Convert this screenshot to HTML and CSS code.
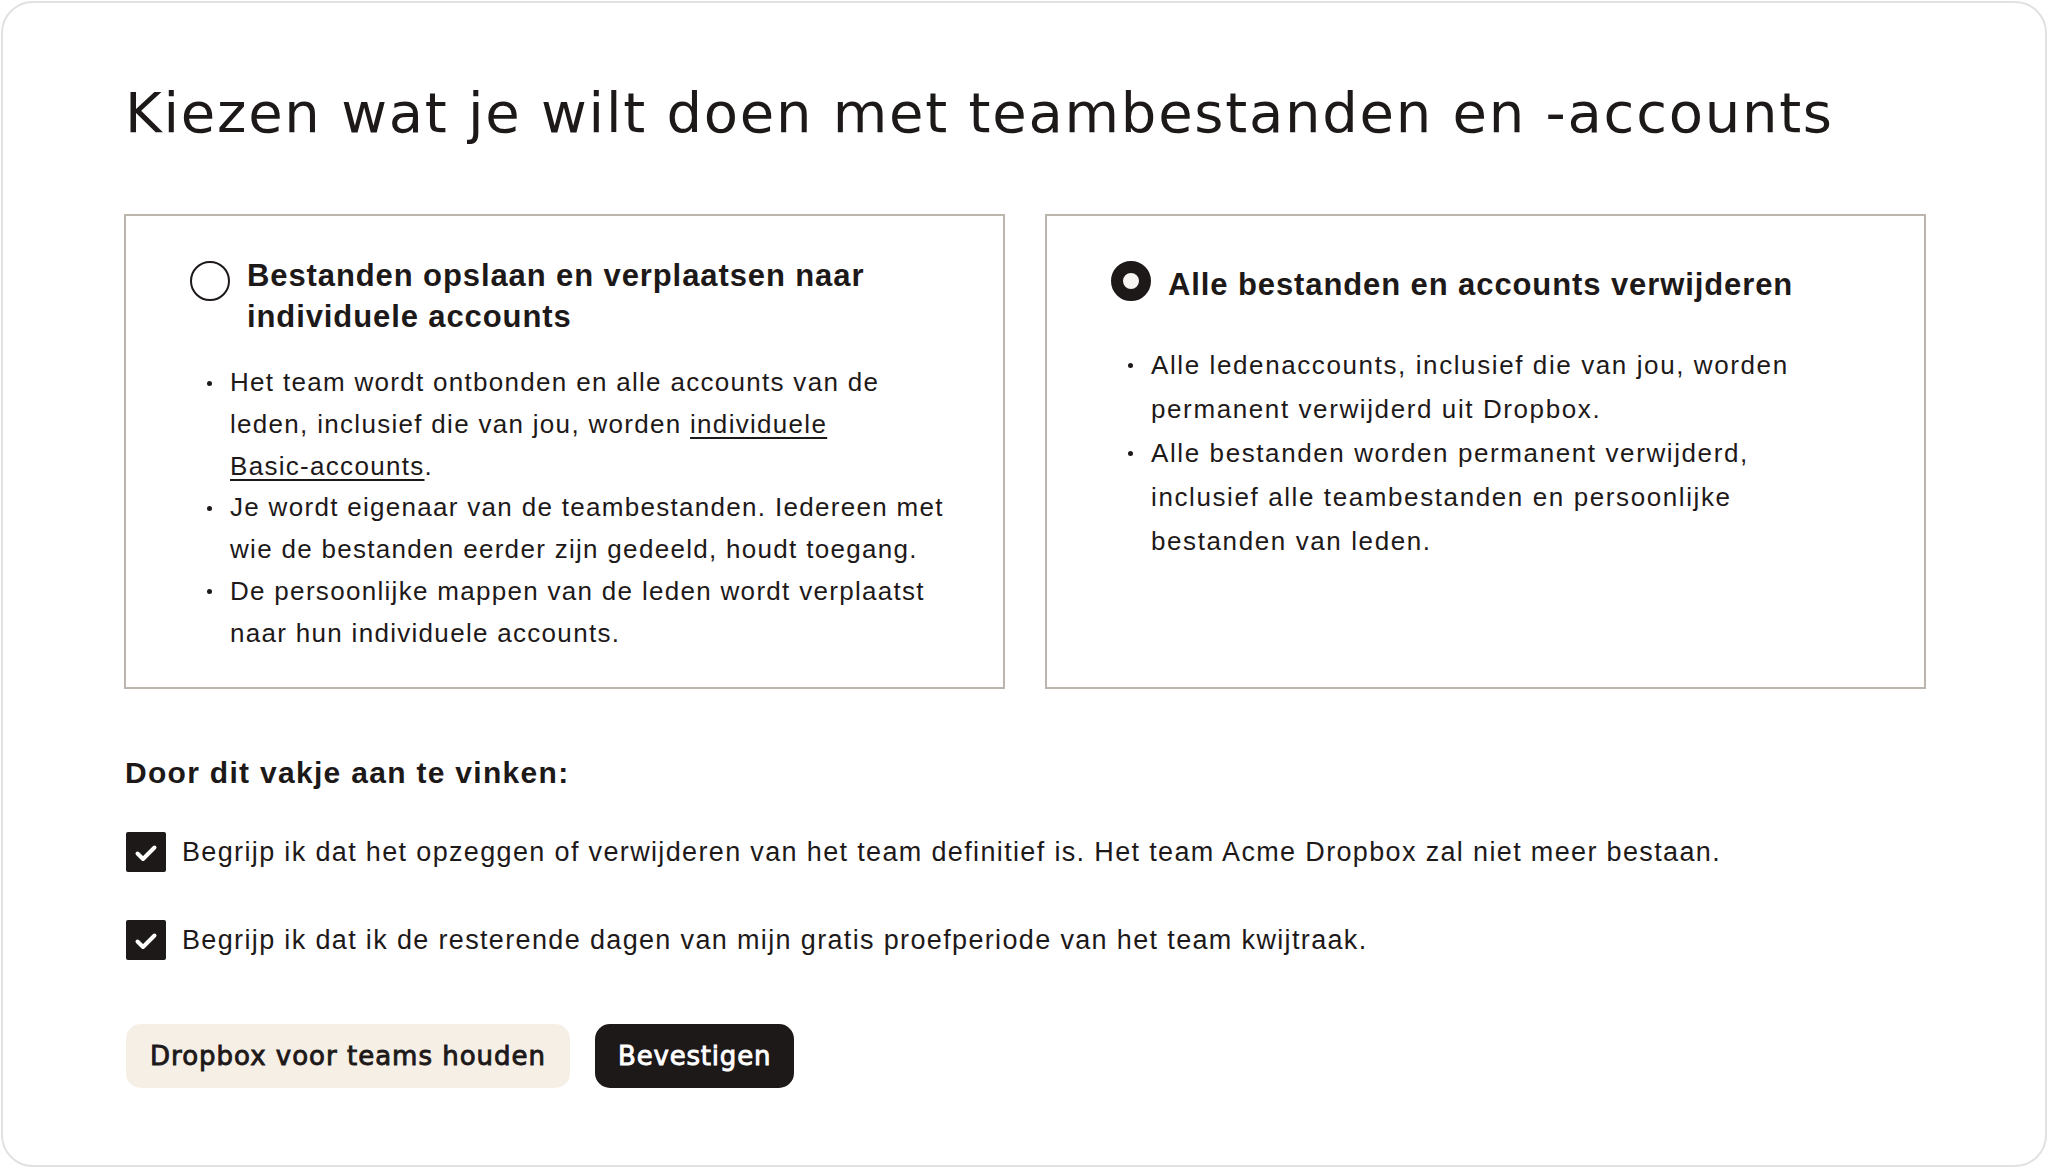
FILE: index.html
```html
<!DOCTYPE html>
<html lang="nl">
<head>
<meta charset="utf-8">
<title>Kiezen wat je wilt doen met teambestanden en -accounts</title>
<link rel="stylesheet" href="styles.css">
</head>
<body>
<main class="frame">
  <h1 class="title">Kiezen wat je wilt doen met teambestanden en -accounts</h1>

  <div class="options">
    <section class="option">
      <div class="option-head">
        <span class="radio"></span>
        <h2 class="option-title option-title--two">Bestanden opslaan en verplaatsen naar individuele accounts</h2>
      </div>
      <ul class="bullets bullets--left">
        <li>Het team wordt ontbonden en alle accounts van de leden, inclusief die van jou, worden <a class="link" href="#">individuele<br>Basic-accounts</a>.</li>
        <li>Je wordt eigenaar van de teambestanden. Iedereen met wie de bestanden eerder zijn gedeeld, houdt toegang.</li>
        <li>De persoonlijke mappen van de leden wordt verplaatst naar hun individuele accounts.</li>
      </ul>
    </section>

    <section class="option option--selected">
      <div class="option-head">
        <span class="radio radio--on"></span>
        <h2 class="option-title option-title--one">Alle bestanden en accounts verwijderen</h2>
      </div>
      <ul class="bullets bullets--right">
        <li>Alle ledenaccounts, inclusief die van jou, worden permanent verwijderd uit Dropbox.</li>
        <li>Alle bestanden worden permanent verwijderd, inclusief alle teambestanden en persoonlijke bestanden van leden.</li>
      </ul>
    </section>
  </div>

  <h3 class="confirm-title">Door dit vakje aan te vinken:</h3>

  <div class="checks">
    <label class="check">
      <span class="box"><svg viewBox="0 0 40 40" width="40" height="40"><path d="M11.5 21.5 L17 27 L28.5 15.5" fill="none" stroke="#ffffff" stroke-width="4" stroke-linecap="round" stroke-linejoin="round"/></svg></span>
      <span class="check-text">Begrijp ik dat het opzeggen of verwijderen van het team definitief is. Het team Acme Dropbox zal niet meer bestaan.</span>
    </label>
    <label class="check">
      <span class="box"><svg viewBox="0 0 40 40" width="40" height="40"><path d="M11.5 21.5 L17 27 L28.5 15.5" fill="none" stroke="#ffffff" stroke-width="4" stroke-linecap="round" stroke-linejoin="round"/></svg></span>
      <span class="check-text">Begrijp ik dat ik de resterende dagen van mijn gratis proefperiode van het team kwijtraak.</span>
    </label>
  </div>

  <div class="actions">
    <button class="btn btn--secondary" type="button">Dropbox voor teams houden</button>
    <button class="btn btn--primary" type="button">Bevestigen</button>
  </div>
</main>
</body>
</html>
```

FILE: styles.css
```css
html, body {
  margin: 0;
  padding: 0;
  background: #ffffff;
}

body {
  color: #1e1919;
  font-family: "Liberation Sans", Arial, sans-serif;
}

.frame {
  box-sizing: border-box;
  height: 1166px;
  margin: 1px;
  border: 2px solid #e1e1e1;
  border-radius: 32px;
  padding: 77px 0 0 121px;
}

.title {
  margin: 0 0 68px 1px;
  font-family: "DejaVu Sans", sans-serif;
  font-weight: normal;
  font-size: 56px;
  line-height: 66px;
  letter-spacing: 1.75px;
  white-space: nowrap;
}

.options {
  display: grid;
  grid-template-columns: 881px 881px;
  column-gap: 40px;
}

.option {
  box-sizing: border-box;
  height: 475px;
  border: 2px solid #bbb5ad;
  padding: 45px 0 0 64px;
}

.option-head {
  display: flex;
  align-items: flex-start;
  gap: 17px;
}

.radio {
  flex: none;
  box-sizing: border-box;
  width: 40px;
  height: 40px;
  border-radius: 50%;
  border: 2px solid #1e1919;
}

.radio--on {
  border: 12px solid #1e1919;
  background: #f7f5f2;
}

.option-title {
  margin: 0;
  font-weight: bold;
  font-size: 31px;
  line-height: 41px;
  letter-spacing: 0.9px;
  max-width: 680px;
}

.option-title--two {
  margin-top: -6px;
}

.option-title--one {
  margin-top: 3px;
}

.bullets {
  list-style: none;
  margin: 0;
  padding: 0 0 0 17px;
  font-size: 26px;
  letter-spacing: 1.3px;
}

.bullets--left {
  margin-top: 25px;
  line-height: 41.8px;
  width: 745px;
}

.bullets--right {
  margin-top: 37.5px;
  line-height: 44px;
  width: 730px;
  letter-spacing: 1.6px;
}

.bullets li {
  padding-left: 23px;
}

.bullets li::before {
  content: "";
  display: inline-block;
  width: 5px;
  height: 5px;
  border-radius: 50%;
  background: #1e1919;
  margin-left: -23px;
  margin-right: 18px;
  vertical-align: 5.5px;
}

.link {
  color: inherit;
  text-decoration: underline;
  text-decoration-thickness: 1.5px;
  text-underline-offset: 4px;
}

.confirm-title {
  margin: 66px 0 0 1px;
  font-weight: bold;
  font-size: 30px;
  line-height: 36px;
  letter-spacing: 1.3px;
}

.checks {
  display: flex;
  flex-direction: column;
  gap: 48px;
  margin-top: 41px;
}

.check {
  display: flex;
  align-items: flex-start;
  gap: 16px;
  margin-left: 2px;
}

.box {
  flex: none;
  width: 40px;
  height: 40px;
  background: #1e1919;
  border-radius: 2px;
  display: block;
}

.box svg {
  display: block;
}

.check-text {
  font-size: 27px;
  line-height: 40px;
  letter-spacing: 1.35px;
  white-space: nowrap;
}

.actions {
  display: flex;
  gap: 25px;
  margin: 64px 0 0 2px;
}

.btn {
  height: 64px;
  border: 0;
  border-radius: 15px;
  padding: 0 24px;
  font-family: "DejaVu Sans", sans-serif;
  font-weight: normal;
  font-size: 26px;
  line-height: 64px;
  letter-spacing: 1px;
  -webkit-text-stroke: 0.9px currentColor;
  color: #1e1919;
  cursor: pointer;
}

.btn--secondary {
  background: #f5efe5;
}

.btn--primary {
  background: #1e1919;
  color: #ffffff;
  padding: 0 23px;
  letter-spacing: 0.8px;
}
```
